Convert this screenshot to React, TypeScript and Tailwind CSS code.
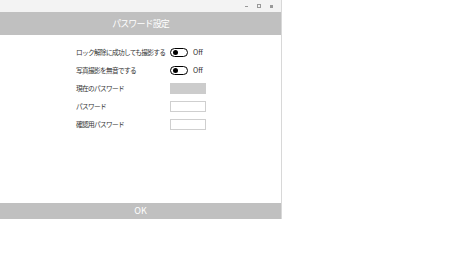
import React from "react";

const font = { fontFamily: '"Noto Sans CJK JP", "Noto Sans", sans-serif' };

function Toggle() {
  return (
    <div className="flex items-center gap-[5px]">
      <div className="w-[18px] h-[9px] rounded-full border border-black flex items-center pl-[2px]">
        <div className="w-[5px] h-[5px] rounded-full bg-black" />
      </div>
      <span className="text-[7px] text-[#333]">Off</span>
    </div>
  );
}

function Row({ label, children }: { label: string; children: React.ReactNode }) {
  return (
    <div className="flex items-center h-[18px]">
      <span className="w-[94px] text-[6.7px] tracking-[-0.7px] text-[#333] whitespace-nowrap">{label}</span>
      {children}
    </div>
  );
}

export default function App() {
  return (
    <div className="w-[450px] h-[253px] bg-white" style={font}>
      <div className="w-[282px] h-[219px] flex flex-col border-r border-[#d8d8d8] bg-white">
        <div className="h-[12px] bg-[#f3f3f3] flex items-center justify-end pr-[8px] gap-[9px]">
          <span className="w-[3px] h-[1px] bg-[#999]" />
          <span className="w-[4px] h-[4px] border border-[#999]" />
          <span className="w-[3px] h-[3px] bg-[#999]" />
        </div>
        <div className="h-[23px] bg-[#c0c0c0] flex items-center justify-center text-white text-[9px] tracking-[-0.9px]">
          パスワード設定
        </div>
        <div className="flex-1 flex flex-col pl-[76px] pt-[8px]">
          <Row label="ロック解除に成功しても撮影する"><Toggle /></Row>
          <Row label="写真撮影を無音でする"><Toggle /></Row>
          <Row label="現在のパスワード">
            <div className="w-[36px] h-[11px] bg-[#cccccc]" />
          </Row>
          <Row label="パスワード">
            <div className="w-[36px] h-[11px] border border-[#cfcfcf] bg-white" />
          </Row>
          <Row label="確認用パスワード">
            <div className="w-[36px] h-[11px] border border-[#cfcfcf] bg-white" />
          </Row>
        </div>
        <div className="h-[16px] bg-[#c0c0c0] flex items-center justify-center text-white text-[9px]">
          OK
        </div>
      </div>
    </div>
  );
}
